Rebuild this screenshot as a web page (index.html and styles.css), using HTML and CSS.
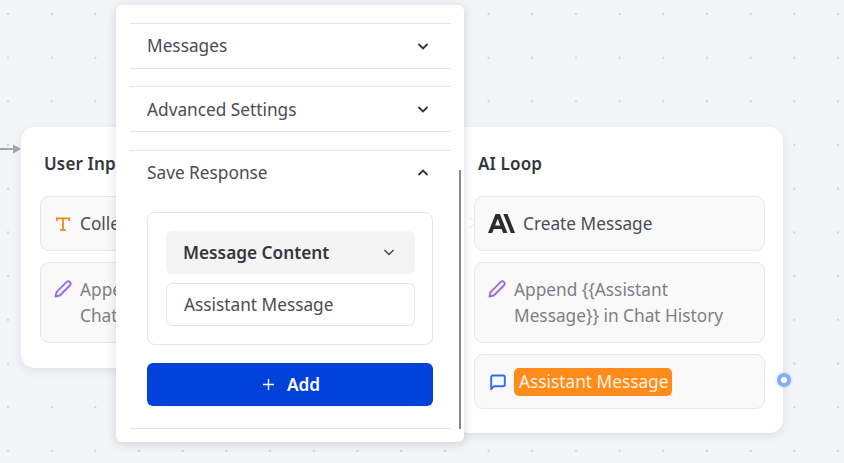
FILE: index.html
```html
<!DOCTYPE html>
<html lang="en">
<head>
<meta charset="utf-8">
<title>Flow editor</title>
<link rel="stylesheet" href="styles.css">
</head>
<body>
<main class="canvas">
  <svg class="edge" width="22" height="12" viewBox="0 0 22 12"><path d="M0 6H15" stroke="#a3a5ab" stroke-width="2" fill="none"/><path d="M13 1.500l8 4.500-8 4.500z" fill="#a3a5ab"/></svg>

  <section class="node node-left">
    <h2 class="node-title">User Input</h2>
    <div class="step">
      <svg class="ico" width="16" height="16" viewBox="0 0 16 16"><path d="M1.800 5V2.300H14.200V5M8 2.300V14M5.300 14H10.700" fill="none" stroke="#f28a1e" stroke-width="1.800"/></svg>
      <span>Collect User Input</span>
    </div>
    <div class="step step-muted">
      <svg class="ico" width="20" height="20" viewBox="0 0 24 24"><path d="M3 21l1.200-5.200L16.500 3.500a2.600 2.600 0 0 1 3.700 0l.3.3a2.600 2.600 0 0 1 0 3.700L8.200 19.800z" fill="none" stroke="#9a6ce8" stroke-width="2.300" stroke-linejoin="round"/></svg>
      <span>Append {{User Input}} in<br>Chat History</span>
    </div>
  </section>

  <section class="node node-right">
    <h2 class="node-title">AI Loop</h2>
    <div class="step">
      <svg class="logo" width="27" height="27" viewBox="0 0 24 24"><path fill="#2b2c30" d="M17.304 3.541h-3.672l6.696 16.918H24Zm-10.608 0L0 20.459h3.744l1.370-3.553h7.005l1.369 3.553h3.744L10.536 3.541Zm-.371 10.223L8.616 7.820l2.291 5.945Z"/></svg>
      <span>Create Message</span>
    </div>
    <div class="step step-muted">
      <svg class="ico" width="20" height="20" viewBox="0 0 24 24"><path d="M3 21l1.200-5.200L16.500 3.500a2.600 2.600 0 0 1 3.700 0l.3.3a2.600 2.600 0 0 1 0 3.700L8.200 19.800z" fill="none" stroke="#9a6ce8" stroke-width="2.300" stroke-linejoin="round"/></svg>
      <span>Append {{Assistant<br>Message}} in Chat History</span>
    </div>
    <div class="step step-tag">
      <svg class="ico" width="18" height="18" viewBox="0 0 18 18"><path d="M2.200 16.200V4.200a1.700 1.700 0 0 1 1.700-1.700h10.200a1.700 1.700 0 0 1 1.700 1.700v7.300a1.700 1.700 0 0 1-1.700 1.700H5z" fill="none" stroke="#2f6bf0" stroke-width="1.900" stroke-linejoin="round"/></svg>
      <span class="tag">Assistant Message</span>
    </div>
    <span class="handle"></span>
    <span class="notch"></span>
  </section>

  <aside class="panel">
    <div class="acc">
      <div class="acc-head"><span>Messages</span>
        <svg width="14" height="14" viewBox="0 0 14 14"><path d="M2.500 5l4.500 4.500L11.500 5" fill="none" stroke="#33363d" stroke-width="1.900"/></svg>
      </div>
    </div>
    <div class="acc">
      <div class="acc-head"><span>Advanced Settings</span>
        <svg width="14" height="14" viewBox="0 0 14 14"><path d="M2.500 5l4.500 4.500L11.500 5" fill="none" stroke="#33363d" stroke-width="1.900"/></svg>
      </div>
    </div>
    <div class="acc acc-open">
      <div class="acc-head"><span>Save Response</span>
        <svg width="14" height="14" viewBox="0 0 14 14"><path d="M2.500 9L7 4.500 11.500 9" fill="none" stroke="#33363d" stroke-width="1.900"/></svg>
      </div>
      <div class="acc-body">
        <div class="field-box">
          <div class="select"><span>Message Content</span>
            <svg width="14" height="14" viewBox="0 0 14 14"><path d="M2.500 5l4.500 4.500L11.500 5" fill="none" stroke="#3f424a" stroke-width="1.400"/></svg>
          </div>
          <div class="input">Assistant Message</div>
        </div>
        <button class="add" type="button">
          <svg width="13" height="13" viewBox="0 0 13 13"><path d="M6.500 1v11M1 6.500h11" stroke="#fff" stroke-width="1.400"/></svg>
          <span>Add</span>
        </button>
      </div>
    </div>
    <div class="scrollbar"></div>
  </aside>
</main>
</body>
</html>
```
FILE: styles.css
```css
* { box-sizing: border-box; }
html, body { margin: 0; height: 100%; }
body { font-family: "Noto Sans", sans-serif; color: #3f424a; overflow: hidden; }

.canvas {
  position: relative;
  width: 844px;
  height: 463px;
  overflow: hidden;
  background-color: #f3f4f8;
  background-image: radial-gradient(circle at 1px 1px, #cbd2e6 1.1px, transparent 1.4px);
  background-size: 43.7px 43.7px;
  background-position: 7px 13px;
}

.edge { position: absolute; left: 0; top: 143px; }

.node {
  position: absolute;
  top: 127px;
  background: #fff;
  border-radius: 14px;
  box-shadow: 0 3px 10px rgba(30, 35, 60, .09);
  display: flex;
  flex-direction: column;
  gap: 11px;
  padding: 0 18px 24px 19px;
}
.node-left { left: 21px; width: 328px; height: 241px; }
.node-right { left: 455px; width: 328px; height: 306px; }

.node-title {
  margin: 0;
  height: 69px;
  margin-bottom: -11px;
  padding: 25px 0 0 4px;
  font-size: 17px;
  line-height: 23px;
  font-weight: 600;
  letter-spacing: .15px;
  color: #33363d;
}

.step {
  display: flex;
  align-items: center;
  gap: 9px;
  height: 55px;
  padding: 0 14px;
  background: #f9f9fa;
  border: 1px solid #e7e7ec;
  border-radius: 9px;
  font-size: 17.25px;
  line-height: 26px;
  color: #4a4d55;
}
.step-muted {
  height: 81px;
  align-items: flex-start;
  padding-top: 14px;
  gap: 7px;
  color: #7c7f87;
}
.step-muted .ico { margin: 2px 0 0 -2px; }
.step-tag { gap: 7px; }
.logo { flex: none; margin: 0 -1px 0 -1px; }
.ico { flex: none; }

.tag {
  display: inline-block;
  height: 28px;
  padding: 0 4px 0 5px;
  line-height: 27px;
  background: #ff8c1a;
  color: #fff2e2;
  border-radius: 5px;
  white-space: nowrap;
}

.handle {
  position: absolute;
  right: -8px;
  top: 246px;
  width: 14px;
  height: 14px;
  border-radius: 50%;
  background: #fff;
  border: 4px solid #86abf5;
  box-shadow: 0 0 0 2px rgba(126, 166, 245, .15);
}
.notch {
  position: absolute;
  left: 11px;
  top: 92px;
  width: 8px;
  height: 8px;
  transform: rotate(45deg);
  background: #fff;
  border-top: 1px solid #eeeef2;
  border-right: 1px solid #eeeef2;
}

.panel {
  position: absolute;
  left: 116px;
  top: 5px;
  width: 348px;
  height: 437px;
  background: #fff;
  border-radius: 6px;
  box-shadow: 0 2px 10px rgba(30, 35, 60, .16);
  padding: 18px 13px 0 14px;
  display: flex;
  flex-direction: column;
  gap: 17.800px;
}

.acc {
  border-top: 1px solid #e5e5e8;
  border-bottom: 1px solid #e5e5e8;
  height: 45.700px;
}
.acc-open { height: 279px; }

.acc-head {
  display: flex;
  align-items: center;
  justify-content: space-between;
  height: 43.700px;
  padding: 0 21px 0 17px;
  font-size: 17.25px;
  color: #4a4d55;
}

.acc-body {
  display: flex;
  flex-direction: column;
  gap: 18px;
  padding: 17.300px 18px 0 17px;
}

.field-box {
  display: flex;
  flex-direction: column;
  gap: 9px;
  height: 133px;
  padding: 18px 17px 18px 18px;
  border: 1px solid #e5e5e8;
  border-radius: 8px;
}

.select {
  display: flex;
  align-items: center;
  justify-content: space-between;
  flex: none;
  height: 43px;
  padding: 0 19px 0 17px;
  background: #f4f4f5;
  border-radius: 6px;
  font-size: 17.25px;
  font-weight: 600;
  color: #33363d;
}

.input {
  flex: none;
  height: 43px;
  padding: 0 17px;
  border: 1px solid #e5e5e8;
  border-radius: 6px;
  font-size: 17.25px;
  line-height: 41px;
  color: #4a4d55;
}

.add {
  display: flex;
  align-items: center;
  justify-content: center;
  flex: none;
  gap: 12px;
  height: 43px;
  padding: 0 0 0 2px;
  border: 0;
  border-radius: 6px;
  background: #0041d9;
  color: #fff;
  font-family: inherit;
  font-size: 17.25px;
  font-weight: 600;
}

.scrollbar {
  position: absolute;
  right: 3px;
  top: 165px;
  width: 2px;
  height: 259px;
  background: #85878c;
}
```
